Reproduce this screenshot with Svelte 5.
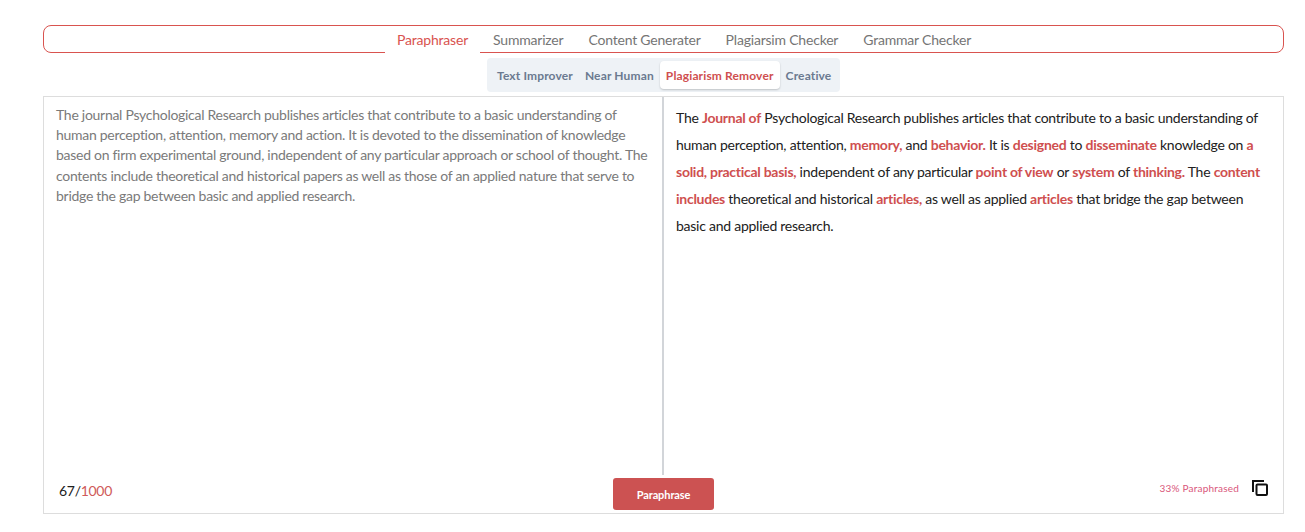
<script>
  const tabs = ["Paraphraser", "Summarizer", "Content Generater", "Plagiarsim Checker", "Grammar Checker"];
  const modes = ["Text Improver", "Near Human", "Plagiarism Remover", "Creative"];
  const activeTab = "Paraphraser";
  const activeMode = "Plagiarism Remover";

  const source =
    "The journal Psychological Research publishes articles that contribute to a basic understanding of human perception, attention, memory and action. It is devoted to the dissemination of knowledge based on firm experimental ground, independent of any particular approach or school of thought. The contents include theoretical and historical papers as well as those of an applied nature that serve to bridge the gap between basic and applied research.";

  // [text, changed]
  const result = [
    ["The ", false],
    ["Journal of", true],
    [" Psychological Research publishes articles that contribute to a basic understanding of human perception, attention, ", false],
    ["memory,", true],
    [" and ", false],
    ["behavior.", true],
    [" It is ", false],
    ["designed", true],
    [" to ", false],
    ["disseminate", true],
    [" knowledge on ", false],
    ["a solid, practical basis,", true],
    [" independent of any particular ", false],
    ["point of view", true],
    [" or ", false],
    ["system", true],
    [" of ", false],
    ["thinking.", true],
    [" The ", false],
    ["content includes", true],
    [" theoretical and historical ", false],
    ["articles,", true],
    [" as well as applied ", false],
    ["articles", true],
    [" that bridge the gap between basic and applied research.", false]
  ];
</script>

<div class="page">
  <nav class="tabs">
    {#each tabs as t}
      <button type="button" class="tab" class:active={t === activeTab}>{t}</button>
    {/each}
  </nav>

  <div class="modes-row">
    <div class="modes">
      {#each modes as m}
        <button type="button" class="mode" class:active={m === activeMode}>{m}</button>
      {/each}
    </div>
  </div>

  <section class="panel">
    <div class="columns">
      <div class="input">{source}</div>
      <div class="output">
        {#each result as [text, changed]}
          {#if changed}<b>{text}</b>{:else}{text}{/if}
        {/each}
      </div>
    </div>
    <div class="footer">
      <div class="count">67/<span>1000</span></div>
      <button type="button" class="submit">Paraphrase</button>
      <div class="stats">
        <span class="percent">33% Paraphrased</span>
        <svg width="16" height="16" viewBox="0 0 16 16" fill="none" stroke="#111" stroke-width="2">
          <path d="M1 12V1h11" />
          <rect x="4.5" y="4.5" width="10.5" height="10.5" rx="1" />
        </svg>
      </div>
    </div>
  </section>
</div>

<style>
  :global(body) {
    background: #fff;
    font-family: Lato, "Open Sans", sans-serif;
  }

  .page {
    padding: 25px 21px 0 43px;
  }

  .tabs {
    display: flex;
    height: 28px;
    padding-left: 341px;
    border: 1px solid #d9534f;
    border-radius: 8px;
    box-sizing: border-box;
  }

  .tab {
    height: 27px;
    padding: 0 12.4px 0 12px;
    border: none;
    border-bottom: 1px solid transparent;
    background: transparent;
    color: #757575;
    font: inherit;
    font-size: 14px;
    letter-spacing: -0.2px;
    white-space: nowrap;
    cursor: pointer;
  }

  .tab + .tab {
    padding-left: 12.6px;
  }

  .tab.active {
    color: #d9534f;
    background: #fff;
    border-bottom-color: #fff;
  }

  .modes-row {
    display: flex;
    justify-content: center;
    margin-top: 5px;
  }

  .modes {
    display: flex;
    align-items: center;
    height: 34px;
    width: 353px;
    box-sizing: border-box;
    padding: 0 4px;
    background: #eef2f6;
    border-radius: 4px;
  }

  .mode {
    height: 28px;
    padding: 0 6px;
    border: none;
    border-radius: 4px;
    background: transparent;
    color: #6b7a90;
    font: inherit;
    font-size: 12px;
    font-weight: 700;
    letter-spacing: 0.14px;
    white-space: nowrap;
    cursor: pointer;
  }

  .mode.active {
    color: #cf4f4f;
    background: #fff;
    box-shadow: 0 1px 2px rgba(0, 0, 0, 0.2);
  }

  .panel {
    margin-top: 4px;
    height: 418px;
    box-sizing: border-box;
    border: 1px solid #ddd;
    display: flex;
    flex-direction: column;
  }

  .columns {
    display: flex;
    height: 378px;
    letter-spacing: -0.25px;
  }

  .input {
    width: 620px;
    flex-shrink: 0;
    box-sizing: border-box;
    padding: 8px 7px 0 12px;
    color: #7a7a7a;
    font-size: 14px;
    line-height: 20.2px;
    letter-spacing: -0.28px;
    border-right: 2px solid #d2d5d9;
  }

  .output {
    flex: 1;
    padding: 7px 12px 0 12px;
    color: #212121;
    font-size: 14px;
    line-height: 27px;
  }

  .output b {
    color: #cf4f4f;
    font-weight: 700;
    letter-spacing: -0.27px;
  }

  .footer {
    flex: 1;
    display: grid;
    grid-template-columns: 1fr auto 1fr;
    align-items: start;
    padding: 0 15px;
  }

  .count {
    margin-top: 7px;
    color: #212121;
    font-size: 14px;
    letter-spacing: -0.3px;
  }

  .count span {
    color: #cf5a5a;
  }

  .submit {
    width: 101px;
    height: 32px;
    margin-top: 3px;
    border: none;
    border-radius: 3px;
    background: #cc5252;
    color: #fff;
    font: inherit;
    font-size: 11px;
    font-weight: 700;
    letter-spacing: -0.1px;
    cursor: pointer;
  }

  .stats {
    display: flex;
    align-items: center;
    justify-content: flex-end;
    gap: 13px;
    margin-top: 5px;
  }

  .percent {
    font-size: 10px;
    letter-spacing: 0.2px;
    color: #d9557a;
  }
</style>
